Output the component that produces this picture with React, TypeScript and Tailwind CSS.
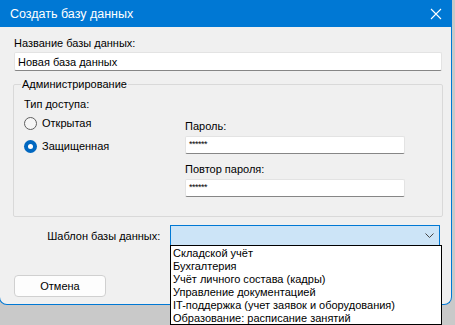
import React from "react";

const templates = [
  "Складской учёт",
  "Бухгалтерия",
  "Учёт личного состава (кадры)",
  "Управление документацией",
  "IT-поддержка (учет заявок и оборудования)",
  "Образование: расписание занятий",
];

function TextBox({ value, className }: { value: string; className: string }) {
  return (
    <div
      className={
        "h-[19px] bg-white border border-[#e3e3e3] border-b-[#868686] rounded-[2px] flex items-center px-[3px] " +
        className
      }
    >
      {value}
    </div>
  );
}

function Password() {
  return (
    <div className="mt-[3px] w-[220px] h-[18px] bg-white border border-[#e3e3e3] border-b-[#868686] rounded-[2px] flex items-start pt-[3px] px-[3px] text-[9px] leading-[9px] tracking-[-0.5px]">
      ******
    </div>
  );
}

function Radio({ label, checked }: { label: string; checked?: boolean }) {
  return (
    <div className="flex items-center gap-[5px] h-[14px]">
      {checked ? (
        <span className="w-[13px] h-[13px] rounded-full bg-[#0067c0] flex items-center justify-center">
          <span className="w-[5px] h-[5px] rounded-full bg-white" />
        </span>
      ) : (
        <span className="w-[13px] h-[13px] rounded-full border border-[#5f5f5f] bg-[#f6f6f6]" />
      )}
      <span>{label}</span>
    </div>
  );
}

export default function App() {
  return (
    <div
      className="relative w-[455px] h-[325px] overflow-hidden bg-[#c9c9c9] text-[11px] leading-[14px] text-black"
      style={{ fontFamily: '"Liberation Sans", Arial, sans-serif' }}
    >
      <div className="ml-[-1px] w-[453px] h-[305px] bg-[#f0f0f0] border-x border-b border-[#0078d4] rounded-b-[8px] overflow-hidden">
        <div className="h-[27px] bg-[#0078d4] text-white flex items-center justify-between pl-[10px] pr-[9px]">
          <span className="text-[12.5px]">Создать базу данных</span>
          <svg width="12" height="12" viewBox="0 0 12 12" stroke="white" strokeWidth="1.1">
            <path d="M1 1L11 11M11 1L1 11" />
          </svg>
        </div>

        <div className="pl-[14px] pr-[11px] pt-[9px]">
          <div>Название базы данных:</div>
          <TextBox value="Новая база данных" className="mt-[2px] w-[428px]" />

          <fieldset className="mt-[6px] w-[430px] h-[140px] border border-[#d9d9d9] rounded-[2px] ml-[-1px] px-0">
            <legend className="ml-[7px] px-[1px]">Администрирование</legend>
            <div className="flex pt-[6px] pl-[10px]">
              <div className="w-[161px] flex flex-col">
                <div>Тип доступа:</div>
                <div className="mt-[5px]">
                  <Radio label="Открытая" />
                </div>
                <div className="mt-[9px]">
                  <Radio label="Защищенная" checked />
                </div>
              </div>
              <div className="pt-[22px] flex flex-col">
                <div>Пароль:</div>
                <Password />
                <div className="mt-[8px]">Повтор пароля:</div>
                <Password />
              </div>
            </div>
          </fieldset>

          <div className="mt-[8px] flex items-center">
            <div className="w-[147px] text-right">Шаблон базы данных:</div>
            <div className="ml-[10px] w-[271px] h-[21px] bg-[#cce4f7] border border-[#0078d4] flex items-center justify-end pr-[5px]">
              <svg width="9" height="5" viewBox="0 0 9 5" fill="none" stroke="#444" strokeWidth="1">
                <path d="M0.5 0.5L4.5 4.5L8.5 0.5" />
              </svg>
            </div>
          </div>

          <button className="mt-[29px] w-[92px] h-[22px] rounded-[4px] border border-[#d0d0d0] bg-[#fdfdfd] flex items-center justify-center">
            Отмена
          </button>
        </div>
      </div>

      <div className="absolute left-[170px] top-[245px] w-[272px] h-[80px] bg-white border border-black pt-[1px] pl-[2px] leading-[13px]">
        {templates.map((t) => (
          <div key={t}>{t}</div>
        ))}
      </div>
    </div>
  );
}
